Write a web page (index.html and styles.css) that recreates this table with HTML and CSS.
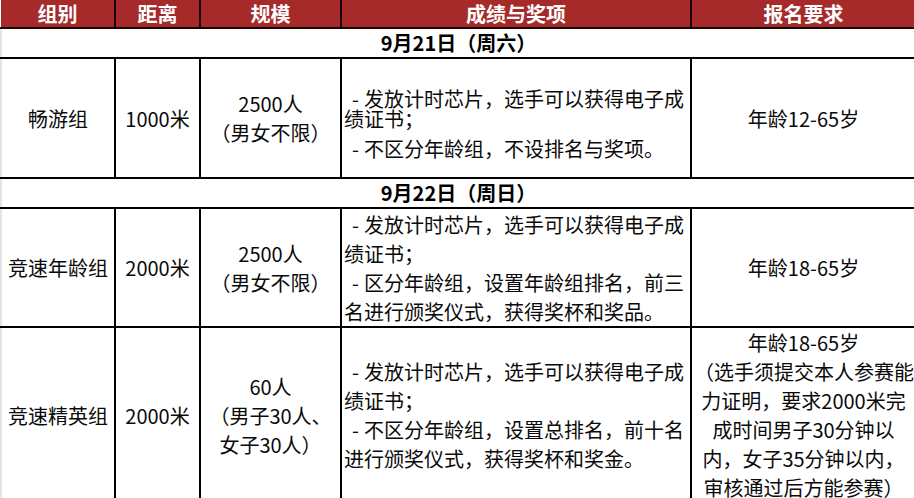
FILE: index.html
```html
<!DOCTYPE html>
<html lang="zh-CN">
<head>
<meta charset="utf-8">
<title>组别与报名要求</title>
<link rel="stylesheet" href="styles.css">
</head>
<body>
<table class="grid">
  <colgroup>
    <col class="w-group">
    <col class="w-dist">
    <col class="w-size">
    <col class="w-award">
    <col class="w-req">
  </colgroup>
  <thead>
    <tr class="head">
      <th>组别</th>
      <th>距离</th>
      <th>规模</th>
      <th>成绩与奖项</th>
      <th>报名要求</th>
    </tr>
  </thead>
  <tbody>
    <tr class="date">
      <td colspan="5">9月21日（周六）</td>
    </tr>
    <tr class="row r1">
      <td class="center">畅游组</td>
      <td class="center">1000米</td>
      <td class="center"><div class="ln">2500人</div><div class="ln">（男女不限）</div></td>
      <td class="award top">
        <div class="ln l20"><span class="bullet">-</span>发放计时芯片，选手可以获得电子成</div>
        <div class="ln l20">绩证书；</div>
        <div class="ln l20 gap"><span class="bullet">-</span>不区分年龄组，不设排名与奖项。</div>
      </td>
      <td class="center">年龄12-65岁</td>
    </tr>
    <tr class="date">
      <td colspan="5">9月22日（周日）</td>
    </tr>
    <tr class="row r2">
      <td class="center">竞速年龄组</td>
      <td class="center">2000米</td>
      <td class="center"><div class="ln">2500人</div><div class="ln">（男女不限）</div></td>
      <td class="award">
        <div class="ln"><span class="bullet">-</span>发放计时芯片，选手可以获得电子成</div>
        <div class="ln">绩证书；</div>
        <div class="ln"><span class="bullet">-</span>区分年龄组，设置年龄组排名，前三</div>
        <div class="ln">名进行颁奖仪式，获得奖杯和奖品。</div>
      </td>
      <td class="center">年龄18-65岁</td>
    </tr>
    <tr class="row r3">
      <td class="center">竞速精英组</td>
      <td class="center">2000米</td>
      <td class="center"><div class="ln">60人</div><div class="ln">（男子30人、</div><div class="ln">女子30人）</div></td>
      <td class="award">
        <div class="ln"><span class="bullet">-</span>发放计时芯片，选手可以获得电子成</div>
        <div class="ln">绩证书；</div>
        <div class="ln"><span class="bullet">-</span>不区分年龄组，设置总排名，前十名</div>
        <div class="ln">进行颁奖仪式，获得奖杯和奖金。</div>
      </td>
      <td class="center">
        <div class="ln">年龄18-65岁</div>
        <div class="ln">（选手须提交本人参赛能</div>
        <div class="ln">力证明，要求2000米完</div>
        <div class="ln">成时间男子30分钟以</div>
        <div class="ln">内，女子35分钟以内，</div>
        <div class="ln">审核通过后方能参赛）</div>
      </td>
    </tr>
  </tbody>
</table>
</body>
</html>
```

FILE: styles.css
```css
html, body {
  margin: 0;
  padding: 0;
  background: #ffffff;
  overflow: hidden;
}

body {
  font-family: "Noto Sans CJK SC", "Noto Sans", sans-serif;
  font-size: 20px;
  color: #0a0a0a;
}

.grid {
  width: 914px;
  table-layout: fixed;
  border-collapse: collapse;
}

.w-group { width: 114px; }
.w-dist { width: 85px; }
.w-size { width: 141px; }
.w-award { width: 350px; }
.w-req { width: 224px; }

.grid th,
.grid td {
  border: 2px solid #000000;
  padding: 0 2px;
  white-space: nowrap;
}

.grid tr > :first-child {
  border-left: 2px solid #e4e4e4;
}

.grid tr > :last-child {
  border-right: 0;
}

.head th {
  background: #a62a2a;
  color: #ffffff;
  font-weight: 700;
  height: 27px;
  line-height: 27px;
  padding: 0;
  border-top: 0;
  border-color: #1a0505;
  text-align: center;
}

.head th:first-child {
  border-left: 0;
}

.date td {
  height: 28px;
  line-height: 28px;
  font-weight: 700;
  text-align: center;
  color: #000000;
}

.r1 td { height: 118px; }
.r2 td { height: 117px; }
.r3 td { height: 174px; }

.center {
  text-align: center;
  vertical-align: middle;
}

.award {
  text-align: left;
  vertical-align: middle;
}

.r1 .award.top {
  height: auto;
  vertical-align: top;
  padding-top: 30px;
}

.bullet {
  display: inline-block;
  padding-left: 8px;
  padding-right: 5px;
}

.ln {
  line-height: 29px;
}

.l20 {
  line-height: 20px;
}

.gap {
  margin-top: 10px;
}
```
